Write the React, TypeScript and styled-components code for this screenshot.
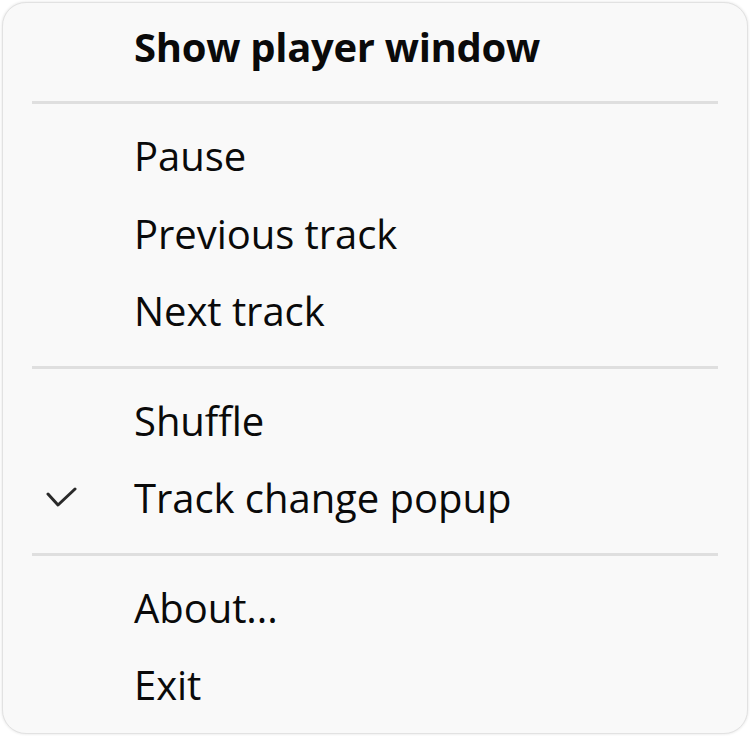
import React from "react";
import styled, { createGlobalStyle } from "styled-components";

const Global = createGlobalStyle`
  html, body {
    margin: 0;
    padding: 0;
    background: #ffffff;
  }
  body {
    font-family: "Segoe UI", "Open Sans", "Noto Sans", sans-serif;
  }
`;

const Menu = styled.div`
  box-sizing: border-box;
  margin: 2px;
  width: 746px;
  height: 732px;
  background: #f9f9f9;
  border: 1px solid #e2e2e2;
  border-radius: 24px;
  box-shadow: 0 0 3px rgba(0, 0, 0, 0.12);
  padding: 6px 0 0;
  display: flex;
  flex-direction: column;
`;

const Item = styled.div<{ $bold?: boolean }>`
  height: 77.5px;
  flex: 0 0 77.5px;
  display: grid;
  grid-template-columns: 131px 1fr;
  align-items: center;
  font-size: 40px;
  font-weight: ${(p) => (p.$bold ? 700 : 400)};
  letter-spacing: ${(p) => (p.$bold ? "-0.3px" : "-0.05px")};
  color: #0a0a0a;
  white-space: nowrap;
`;

const Check = styled.span`
  display: flex;
  justify-content: flex-start;
  padding-left: 40px;
`;

const Label = styled.span`
  line-height: 1;
  transform: translateY(-1px);
`;

const Separator = styled.div`
  flex: 0 0 32px;
  display: flex;
  align-items: center;
  padding: 0 29px 0 29px;
  &::after {
    content: "";
    flex: 1;
    height: 3px;
    background: #dfdfdf;
  }
`;

const CheckMark = () => (
  <svg width="34" height="26" viewBox="0 0 34 26">
    <path
      d="M5 8 L15 19 L32 3"
      fill="none"
      stroke="#2a2a2a"
      strokeWidth="3"
      strokeLinecap="round"
      strokeLinejoin="round"
    />
  </svg>
);

type Entry =
  | { kind: "item"; label: string; bold?: boolean; checked?: boolean }
  | { kind: "sep" };

const entries: Entry[] = [
  { kind: "item", label: "Show player window", bold: true },
  { kind: "sep" },
  { kind: "item", label: "Pause" },
  { kind: "item", label: "Previous track" },
  { kind: "item", label: "Next track" },
  { kind: "sep" },
  { kind: "item", label: "Shuffle" },
  { kind: "item", label: "Track change popup", checked: true },
  { kind: "sep" },
  { kind: "item", label: "About..." },
  { kind: "item", label: "Exit" },
];

export default function App() {
  return (
    <>
      <Global />
      <Menu>
        {entries.map((e, i) =>
          e.kind === "sep" ? (
            <Separator key={i} />
          ) : (
            <Item key={i} $bold={e.bold}>
              <Check>{e.checked ? <CheckMark /> : null}</Check>
              <Label>{e.label}</Label>
            </Item>
          )
        )}
      </Menu>
    </>
  );
}
